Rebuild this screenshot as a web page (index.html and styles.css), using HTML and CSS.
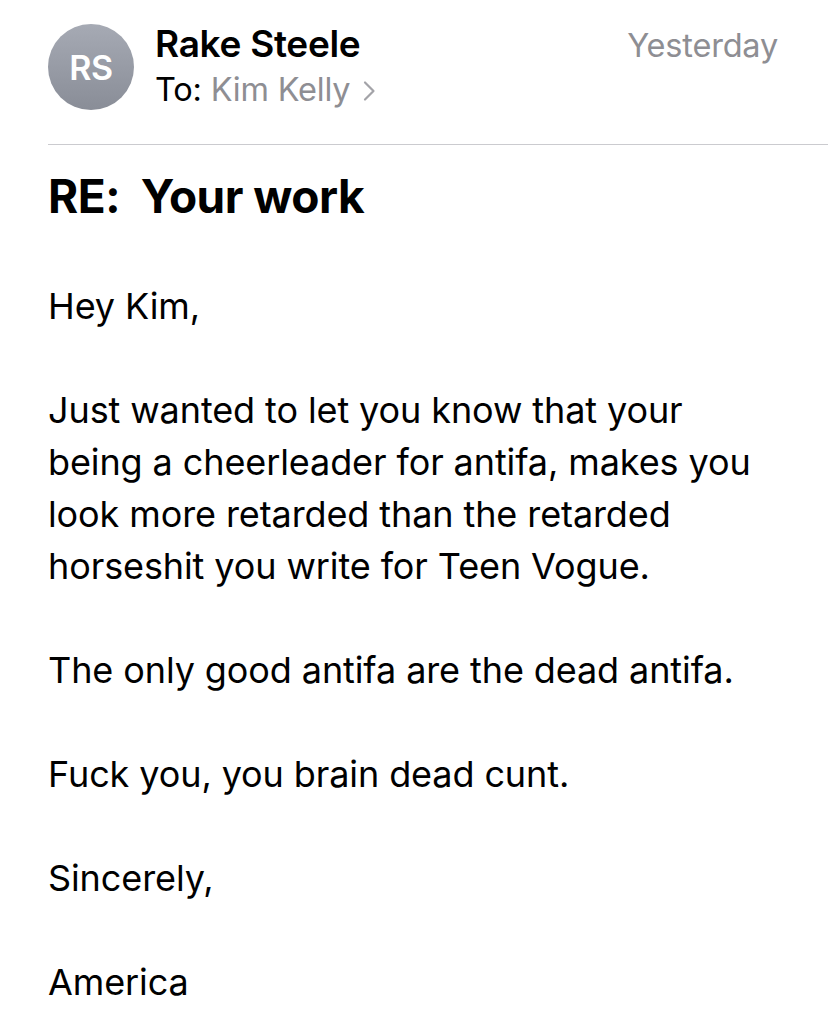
FILE: index.html
```html
<!DOCTYPE html>
<html lang="en">
    <head>
        <meta charset="UTF-8">
        <title>RE: Your work</title>
        <link rel="stylesheet" href="styles.css">
    </head>
    <body>
        <div class="mail">
            <div class="header">
                <div class="avatar">RS</div>
                <div class="who">
                    <div class="sender">Rake Steele</div>
                    <div class="to">To: <span class="recipient">Kim Kelly</span><svg class="chev" width="14" height="24" viewBox="0 0 14 24">
                            <path d="M3 3.5l8.5 8.5-8.5 8.5" fill="none" stroke="#a3a3a8" stroke-width="2.2" stroke-linecap="round" stroke-linejoin="round"/>
                        </svg>
                    </div>
                </div>
                <div class="date">Yesterday</div>
            </div>
            <h1 class="subject">RE:&nbsp; Your work</h1>
            <div class="body">
                <p>Hey Kim,</p>
                <p>Just wanted to let you know that your being a cheerleader for antifa, makes you look more retarded than the retarded horseshit you write for Teen Vogue.</p>
                <p>The only good antifa are the dead antifa.</p>
                <p>Fuck you, you brain dead cunt.</p>
                <p>Sincerely,</p>
                <p>America</p>
            </div>
        </div>
    </body>
</html>
```

FILE: styles.css
```css
body {
    margin: 0;
    background-color: #ffffff;
    color: #000000;
    font-family: Inter, "Liberation Sans", sans-serif;
}

.mail {
    padding: 24px 0 0 48px;
}

.header {
    display: flex;
    align-items: flex-start;
    padding-bottom: 30px;
    border-bottom: 1px solid #cbcbcf;
}

.avatar {
    width: 86px;
    height: 86px;
    border-radius: 50%;
    background: linear-gradient(#a6aab4, #898d97);
    color: #ffffff;
    font-size: 34px;
    font-weight: 600;
    display: flex;
    align-items: center;
    justify-content: center;
    letter-spacing: -0.5px;
}

.who {
    margin: -2px 0 0 21px;
    flex: 1;
}

.sender {
    font-size: 37px;
    font-weight: 600;
    line-height: 44px;
    letter-spacing: -0.3px;
}

.to {
    font-size: 32.5px;
    line-height: 48px;
    letter-spacing: -0.2px;
}

.recipient {
    color: #8e8e93;
}

.chev {
    margin-left: 12px;
    vertical-align: -2px;
}

.date {
    margin-right: 50px;
    color: #8e8e93;
    font-size: 32.5px;
    line-height: 44px;
    letter-spacing: -0.2px;
}

.subject {
    margin: 25px 0 0;
    font-size: 46px;
    font-weight: 700;
    line-height: 52px;
    letter-spacing: -0.5px;
}

.body {
    margin-top: 58px;
    padding-right: 60px;
    font-size: 36px;
    line-height: 52px;
    letter-spacing: -0.1px;
}

.body p {
    margin: 0 0 52px;
}
```
